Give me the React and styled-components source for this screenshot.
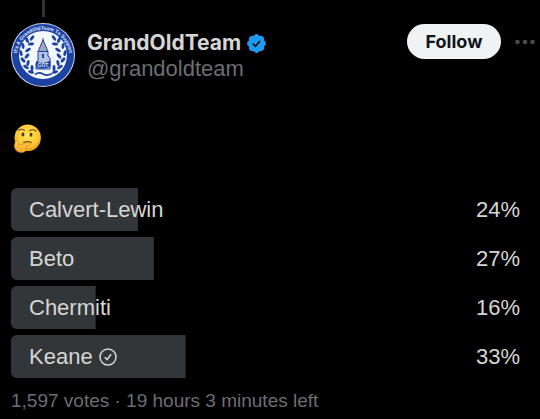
import styled, { createGlobalStyle } from "styled-components";

const COLORS = {
  background: "#000000",
  text: "#d6d6d6",
  muted: "#6b6e72",
  bar: "#333639",
  line: "#2f3336",
  verified: "#1d9bf0",
  crest: "#1c42a4",
};

const FONTS = {
  body: '"Liberation Sans", Arial, sans-serif',
  bold: 'Inter, "Liberation Sans", sans-serif',
};

const GlobalStyle = createGlobalStyle`
  * {
    box-sizing: border-box;
  }

  body {
    margin: 0;
    background-color: ${COLORS.background};
    color: ${COLORS.text};
    font-family: ${FONTS.body};
  }
`;

const Post = styled.article`
  padding-left: 11px;
`;

const Header = styled.header`
  display: flex;
  align-items: flex-end;
  gap: 12px;
`;

const AvatarColumn = styled.div`
  display: flex;
  flex-direction: column;
  align-items: center;
  gap: 6px;
`;

const ThreadLine = styled.div`
  width: 3px;
  height: 17px;
  background-color: ${COLORS.line};
`;

const Account = styled.div`
  flex: 1;
  padding-bottom: 5px;
`;

const NameRow = styled.div`
  display: flex;
  align-items: center;
  gap: 6px;
`;

const Name = styled.a`
  color: ${COLORS.text};
  font-family: ${FONTS.bold};
  font-size: 21px;
  font-weight: 700;
  line-height: 26px;
  text-decoration: none;
`;

const Handle = styled.a`
  display: block;
  color: ${COLORS.muted};
  font-size: 22px;
  line-height: 26px;
  text-decoration: none;
`;

const Actions = styled.div`
  display: flex;
  align-items: center;
  gap: 14px;
  padding: 0 4px 28px 0;
`;

const FollowButton = styled.button`
  min-width: 94px;
  height: 35px;
  padding: 0 18px;
  border: 0;
  border-radius: 18px;
  background-color: #eff3f4;
  color: #0f1419;
  font-family: ${FONTS.bold};
  font-size: 18px;
  font-weight: 700;
`;

const MoreButton = styled.button`
  display: flex;
  padding: 0;
  border: 0;
  background: none;
  color: #4a4c4f;
`;

const Message = styled.div`
  display: flex;
  padding: 37px 0 35px 2px;
`;

const Options = styled.ul`
  display: flex;
  flex-direction: column;
  gap: 6px;
  margin: 0;
  padding: 0;
  list-style: none;
`;

const Option = styled.li`
  display: flex;
  align-items: center;
  justify-content: space-between;
  height: 43px;
  padding: 0 20px 0 18px;
  border-radius: 6px 0 0 6px;
  background: linear-gradient(${COLORS.bar}, ${COLORS.bar}) no-repeat left / ${(props) => props.$share}% 100%;
  font-size: 22px;
`;

const OptionLabel = styled.span`
  display: flex;
  align-items: center;
  gap: 6px;
`;

const Summary = styled.p`
  margin: 0;
  padding: 10px 0 4px;
  color: ${COLORS.muted};
  font-size: 19px;
  line-height: 26px;
`;

const OPTIONS = [
  { name: "Calvert-Lewin", share: 24 },
  { name: "Beto", share: 27 },
  { name: "Chermiti", share: 16 },
  { name: "Keane", share: 33, chosen: true },
];

// one side of the laurel wreath: x, y, rotation of each leaf
const LEAVES = [
  [21, 15, 35],
  [16, 17, -25],
  [20, 21, 80],
  [12, 23, -5],
  [17, 27, 60],
  [10, 30, -15],
  [16, 33, 40],
  [12, 37, -40],
  [17, 40, 15],
  [15, 44, -60],
  [21, 45, 0],
  [20, 49, -75],
];

function Laurel() {
  return LEAVES.map(([x, y, turn]) => (
    <ellipse
      key={`${x}-${y}`}
      cx={x}
      cy={y}
      rx="1.5"
      ry="3.1"
      transform={`rotate(${turn} ${x} ${y})`}
    />
  ));
}

function Crest() {
  return (
    <svg width="64" height="64" viewBox="0 0 64 64" role="img" aria-label="GrandOldTeam">
      <circle cx="32" cy="32" r="32" fill="#c9d3ea" />
      <circle cx="32" cy="32" r="31" fill={COLORS.crest} />
      <circle cx="32" cy="32" r="24" fill="#f4f7fc" />
      <path id="motto" d="M6.4 38.5 A26.2 26.2 0 1 1 57.6 38.5" fill="none" />
      <text fill="#e3eaf8" fontSize="5" fontWeight="700" fontFamily="Liberation Sans, sans-serif">
        <textPath href="#motto" startOffset="50%" textAnchor="middle">
          It's A GrandOldTeam To Support
        </textPath>
      </text>
      <g fill={COLORS.crest}>
        <Laurel />
        <g transform="translate(64 0) scale(-1 1)">
          <Laurel />
        </g>
      </g>
      <path d="M32 15 V18" stroke={COLORS.crest} />
      <path d="M32 17 L27 28.5 H37 Z" fill="#9fa9bd" stroke={COLORS.crest} strokeWidth="1" />
      <path d="M27 28.5 H37 V33 L39 35 V46 H25 V40 L27 38 Z" fill="#b3c2e3" stroke={COLORS.crest} strokeWidth="1" />
      <path d="M31 31 H33 V35 H31 Z" fill={COLORS.crest} />
      <path d="M25 38 Q32 42 39.5 37.5 V43.5 Q32 47.5 25 44 Z" fill={COLORS.crest} />
      <text x="32" y="44" fill="#dce4f5" fontSize="5" fontWeight="700" textAnchor="middle" fontFamily="Liberation Sans, sans-serif">
        GOT
      </text>
      <path d="M24 51.5 Q28 48.5 32 51 T41 50.5" fill="none" stroke={COLORS.crest} strokeWidth="1.6" />
    </svg>
  );
}

function VerifiedBadge() {
  return (
    <svg width="19" height="19" viewBox="1.5 1.5 19 19" role="img" aria-label="Verified account">
      <path
        fill={COLORS.verified}
        d="M20.396 11c-.018-.646-.215-1.275-.57-1.816-.354-.54-.852-.972-1.438-1.246.223-.607.27-1.264.14-1.897-.131-.634-.437-1.218-.882-1.687-.47-.445-1.053-.75-1.687-.882-.633-.13-1.29-.083-1.897.14-.273-.587-.704-1.086-1.245-1.44S11.647 1.62 11 1.604c-.646.017-1.273.213-1.813.568s-.969.854-1.24 1.44c-.608-.223-1.267-.272-1.902-.14-.635.13-1.22.436-1.69.882-.445.47-.749 1.055-.878 1.688-.13.633-.08 1.29.144 1.896-.587.274-1.087.705-1.443 1.245-.356.54-.555 1.17-.574 1.817.02.647.218 1.276.574 1.817.356.54.856.972 1.443 1.245-.224.606-.274 1.263-.144 1.896.13.634.433 1.218.877 1.688.47.443 1.054.747 1.687.878.633.132 1.29.084 1.897-.136.274.586.705 1.084 1.246 1.439.54.354 1.17.551 1.816.569.647-.016 1.276-.213 1.817-.567s.972-.854 1.245-1.44c.604.239 1.266.296 1.903.164.636-.132 1.22-.447 1.68-.907.46-.46.776-1.044.908-1.681s.075-1.299-.165-1.903c.586-.274 1.084-.705 1.439-1.246.354-.54.551-1.17.569-1.816z"
      />
      <path d="M7.4 11.2 L9.9 13.7 L14.4 8.6" fill="none" stroke="#06121c" strokeWidth="1.7" />
    </svg>
  );
}

function MoreIcon() {
  return (
    <svg width="21" height="6" viewBox="0 0 21 6" fill="currentColor" aria-hidden="true">
      <circle cx="2.5" cy="3" r="2.3" />
      <circle cx="10" cy="3" r="2.3" />
      <circle cx="17.5" cy="3" r="2.3" />
    </svg>
  );
}

function ThinkingFace() {
  return (
    <svg width="29" height="29" viewBox="0 0 29 29" role="img" aria-label="Thinking face">
      <defs>
        <radialGradient id="skin" cx="50%" cy="40%" r="62%">
          <stop offset="0" stopColor="#ffe45c" />
          <stop offset="0.65" stopColor="#fdc936" />
          <stop offset="1" stopColor="#e9951c" />
        </radialGradient>
        <linearGradient id="hand" x1="0" y1="0" x2="0" y2="1">
          <stop offset="0" stopColor="#ffd04a" />
          <stop offset="1" stopColor="#f6a62a" />
        </linearGradient>
      </defs>
      <circle cx="14.7" cy="13.8" r="13.2" fill="url(#skin)" />
      <path d="M5.6 6.4 Q8.2 4.2 11.4 6.2" fill="none" stroke="#6c430c" strokeWidth="1.1" strokeLinecap="round" />
      <path d="M16.5 6.9 Q19.8 4.6 23 7" fill="none" stroke="#6c430c" strokeWidth="1.1" strokeLinecap="round" />
      <ellipse cx="10" cy="10.5" rx="1.4" ry="2" fill="#563408" />
      <ellipse cx="18" cy="10.8" rx="1.4" ry="2" fill="#563408" />
      <path d="M10.5 18.3 Q15 16.8 18.5 18.6" fill="none" stroke="#6c430c" strokeWidth="1.1" strokeLinecap="round" />
      <path
        d="M2.4 17.5 C3.4 15.6 5.2 16.4 5.4 18.6 L5.8 21 L15.8 18.7 C18.4 18.4 18.7 20.7 16.7 21.3 L12.6 22.4 C14.8 22.6 14.6 24.6 13.6 25 C13.6 27.5 10.8 28.6 7.4 28.4 C3.2 28 1.2 24.5 1.5 21 Z"
        fill="url(#hand)"
        stroke="#e58b19"
        strokeWidth="0.6"
      />
    </svg>
  );
}

function ChosenMark() {
  return (
    <svg width="18" height="18" viewBox="0 0 18 18" fill="none" stroke="currentColor" role="img" aria-label="Your vote">
      <circle cx="9" cy="9" r="8" strokeWidth="1.5" />
      <path d="M5.8 9.3 L8.1 11.6 L12.1 6.3" strokeWidth="1.6" />
    </svg>
  );
}

function App() {
  return (
    <>
      <GlobalStyle />
      <Post>
        <Header>
          <AvatarColumn>
            <ThreadLine />
            <Crest />
          </AvatarColumn>
          <Account>
            <NameRow>
              <Name href="#grandoldteam">GrandOldTeam</Name>
              <VerifiedBadge />
            </NameRow>
            <Handle href="#grandoldteam">@grandoldteam</Handle>
          </Account>
          <Actions>
            <FollowButton type="button">Follow</FollowButton>
            <MoreButton type="button" aria-label="More">
              <MoreIcon />
            </MoreButton>
          </Actions>
        </Header>
        <Message>
          <ThinkingFace />
        </Message>
        <Options>
          {OPTIONS.map((option) => (
            <Option key={option.name} $share={option.share}>
              <OptionLabel>
                {option.name}
                {option.chosen && <ChosenMark />}
              </OptionLabel>
              <span>{option.share}%</span>
            </Option>
          ))}
        </Options>
        <Summary>1,597 votes · 19 hours 3 minutes left</Summary>
      </Post>
    </>
  );
}

export default App;
